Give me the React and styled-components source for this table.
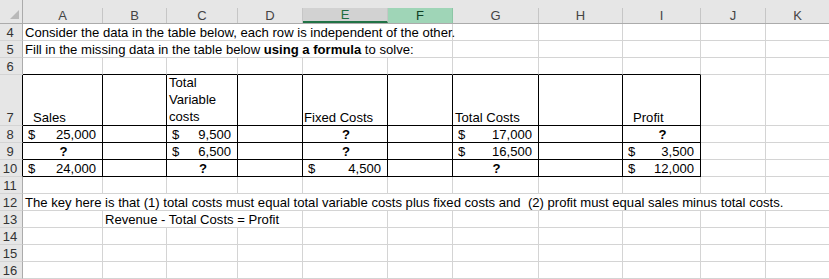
import React from 'react'
import styled, { createGlobalStyle } from 'styled-components'

const GlobalStyle = createGlobalStyle`
  html, body { margin: 0; padding: 0; background: #fff; }
  body { font-family: "Liberation Sans", Arial, sans-serif; }
`

const COLS = ['A', 'B', 'C', 'D', 'E', 'F', 'G', 'H', 'I', 'J', 'K']
const WIDTHS = [80, 64, 71, 65, 85, 65, 86, 84, 78, 65, 64]

const GRID = '#d4d4d4'
const HEAD_BG = '#e6e6e6'

const Sheet = styled.div`
  display: grid;
  grid-template-columns: 23px ${WIDTHS.map(w => w + 'px').join(' ')};
  width: 829px;
  height: 279px;
  overflow: hidden;
  font-size: 13.1px;
  color: #000;
  background: #fff;
`

const Corner = styled.div`
  height: 24px;
  background: ${HEAD_BG};
  border-right: 1px solid #ababab;
  border-bottom: 1px solid #ababab;
  box-sizing: border-box;
  display: flex;
  align-items: flex-end;
  justify-content: flex-end;
  padding: 0 3px 4px 0;
`

const Triangle = styled.div`
  width: 0;
  height: 0;
  border-left: 9px solid transparent;
  border-bottom: 9px solid #b9b9b9;
`

const ColHead = styled.div`
  height: 24px;
  padding-top: 8px;
  box-sizing: border-box;
  background: ${HEAD_BG};
  border-bottom: 1px solid #ababab;
`

const HeadFace = styled.div`
  height: 15px;
  box-sizing: border-box;
  display: flex;
  align-items: center;
  justify-content: center;
  font-size: 13px;
  line-height: 15px;
  color: ${p => (p.$state === 'range' ? '#1d6b40' : p.$state === 'full' ? '#0e3f24' : '#444')};
  background: ${p => (p.$state === 'range' ? '#d2d2d2' : p.$state === 'full' ? '#9fd5b7' : HEAD_BG)};
  border-right: 1px solid ${p => (p.$state === 'full' ? '#8cc6a5' : '#c6c6c6')};
  border-bottom: ${p => (p.$state === 'range' ? '2px solid #217346' : 'none')};
  margin-bottom: ${p => (p.$state === 'range' ? '-1px' : '0')};
`

const RowHead = styled.div`
  background: ${HEAD_BG};
  box-sizing: border-box;
  border-right: 1px solid ${p => (p.$black ? '#000' : '#ababab')};
  border-bottom: 1px solid ${GRID};
  color: #333;
  display: flex;
  align-items: flex-end;
  justify-content: center;
  padding-right: 2px;
  line-height: 14px;
  font-size: 13px;
`

const Cell = styled.div`
  box-sizing: border-box;
  grid-column: span ${p => p.$span || 1};
  border-right: 1px solid ${p => (p.$br ? '#000' : GRID)};
  border-bottom: 1px solid ${p => (p.$bb ? '#000' : GRID)};
  display: flex;
  align-items: flex-end;
  justify-content: ${p => (p.$center ? 'center' : 'flex-start')};
  padding-left: ${p => (p.$indent != null ? p.$indent : 2)}px;
  white-space: ${p => (p.$wrap ? 'normal' : 'pre')};
  line-height: ${p => (p.$wrap ? '17px' : '14px')};
  overflow: ${p => (p.$spill ? 'visible' : 'hidden')};
  min-width: 0;
`

const Text = styled.span`
  display: block;
`

const Acct = styled.div`
  flex: 1;
  display: flex;
  justify-content: space-between;
  padding: 0 6px 0 5px;
`

const Q = styled.span`
  font-weight: 700;
`

const H = 17
const ROWS = [
  { n: 4, cells: { 0: { span: 6, text: 'Consider the data in the table below, each row is independent of the other.' } } },
  {
    n: 5,
    cells: {
      0: {
        span: 6,
        text: (
          <>
            Fill in the missing data in the table below <b>using a formula</b> to solve:
          </>
        ),
      },
    },
  },
  { n: 6, cells: {} },
  {
    n: 7,
    h: 51,
    cells: {
      0: { text: 'Sales', indent: 10 },
      2: { text: 'Total Variable costs', wrap: true },
      4: { text: 'Fixed Costs', indent: 1 },
      6: { text: 'Total Costs' },
      8: { text: 'Profit', indent: 10 },
    },
  },
  {
    n: 8,
    cells: {
      0: { acct: '25,000' },
      2: { acct: '9,500' },
      4: { q: true },
      6: { acct: '17,000' },
      8: { q: true },
    },
  },
  {
    n: 9,
    cells: {
      0: { q: true },
      2: { acct: '6,500' },
      4: { q: true },
      6: { acct: '16,500' },
      8: { acct: '3,500' },
    },
  },
  {
    n: 10,
    cells: {
      0: { acct: '24,000' },
      2: { q: true },
      4: { acct: '4,500' },
      6: { q: true },
      8: { acct: '12,000' },
    },
  },
  { n: 11, cells: {} },
  {
    n: 12,
    cells: {
      0: {
        span: 11,
        text: 'The key here is that (1) total costs must equal total variable costs plus fixed costs and  (2) profit must equal sales minus total costs.',
      },
    },
  },
  { n: 13, cells: { 1: { span: 3, text: 'Revenue - Total Costs = Profit' } } },
  { n: 14, cells: {} },
  { n: 15, cells: {} },
  { n: 16, cells: {} },
]

const inTable = n => n >= 7 && n <= 10

function renderRow(row) {
  const out = [
    <RowHead key={'h' + row.n} $black={inTable(row.n)}>
      {row.n}
    </RowHead>,
  ]
  for (let c = 0; c < COLS.length; c++) {
    const def = row.cells[c] || {}
    const span = def.span || 1
    const boxed = c <= 8
    const bb = boxed && (row.n === 6 || inTable(row.n))
    const br = boxed && inTable(row.n)
    let content = def.text ? <Text>{def.text}</Text> : null
    if (def.acct) {
      content = (
        <Acct>
          <span>$</span>
          <span>{def.acct}</span>
        </Acct>
      )
    } else if (def.q) {
      content = <Q>?</Q>
    }
    out.push(
      <Cell
        key={row.n + '-' + c}
        $span={span}
        $bb={bb}
        $br={br}
        $wrap={def.wrap}
        $spill={span > 1}
        $center={def.q}
        $indent={def.acct ? 0 : def.indent}
      >
        {content}
      </Cell>
    )
    c += span - 1
  }
  return out
}

export default function App() {
  const rowTemplate = ['24px', ...ROWS.map(r => (r.h || H) + 'px')].join(' ')
  return (
    <>
      <GlobalStyle />
      <Sheet style={{ gridTemplateRows: rowTemplate }}>
        <Corner>
          <Triangle />
        </Corner>
        {COLS.map(l => (
          <ColHead key={l}>
            <HeadFace $state={l === 'E' ? 'range' : l === 'F' ? 'full' : undefined}>{l}</HeadFace>
          </ColHead>
        ))}
        {ROWS.map(renderRow)}
      </Sheet>
    </>
  )
}
